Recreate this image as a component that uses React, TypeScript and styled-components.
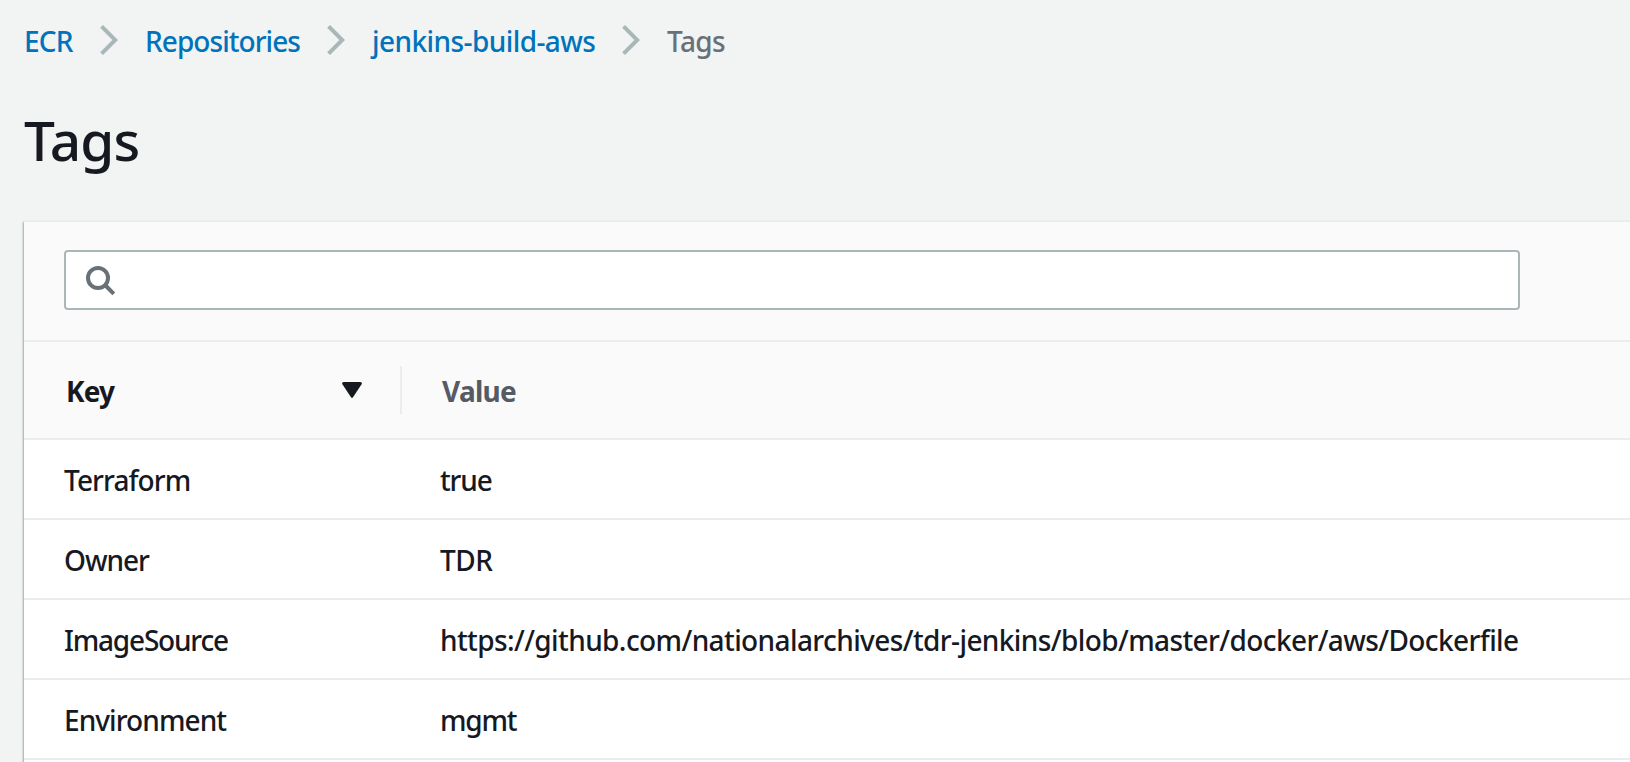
import React from 'react';
import styled, { createGlobalStyle } from 'styled-components';

const GlobalStyle = createGlobalStyle`
  * { box-sizing: border-box; }
  html, body { margin: 0; height: 100%; overflow: hidden; }
  body {
    background: #f2f3f3;
    color: #16191f;
    font-family: 'Noto Sans', 'Open Sans', sans-serif;
    font-size: 28px;
    font-weight: 500;
    line-height: 40px;
  }
`;

const Page = styled.main`
  height: 762px;
  padding-left: 24px;
  overflow: hidden;
`;

const Breadcrumbs = styled.nav`
  display: flex;
  align-items: center;
  height: 80px;
`;

const Label = styled.span<{ $track: number }>`
  letter-spacing: ${(p) => p.$track}px;
  white-space: nowrap;
`;

const Crumb = styled(Label).attrs({ as: 'a' })<{ $width: number }>`
  width: ${(p) => p.$width}px;
  padding-top: 1px;
  color: #0073bb;
`;

const CurrentCrumb = styled(Label)`
  padding-top: 1px;
  color: #687078;
`;

const Chevron = styled.svg`
  width: 18px;
  height: 32px;
  margin-right: 27px;
  flex: none;
  fill: none;
  stroke: #aab7b8;
  stroke-width: 4;
`;

const Title = styled.h1`
  margin: 20px 0 41px;
  font-size: 55px;
  font-weight: 500;
  line-height: 79px;
  letter-spacing: -0.85px;
`;

const Panel = styled.section`
  width: 1640px;
  height: 600px;
  background: #fff;
  border-top: 2px solid #eaeded;
  box-shadow: 0 2px 2px rgba(0, 28, 36, 0.3), -1px 2px 2px rgba(0, 28, 36, 0.25);
`;

const Toolbar = styled.div`
  height: 120px;
  padding: 28px 40px 0;
  background: #fafafa;
  border-bottom: 2px solid #eaeded;
`;

const SearchBox = styled.div`
  display: flex;
  align-items: center;
  width: 1456px;
  height: 60px;
  padding-left: 18px;
  background: #fff;
  border: 2px solid #aab7b8;
  border-radius: 4px;
`;

const SearchIcon = styled.svg`
  width: 32px;
  height: 32px;
  fill: none;
  stroke: #687078;
  stroke-width: 4;
`;

const columns = `
  display: grid;
  grid-template-columns: 378px 1fr;
  align-items: center;
`;

const HeaderRow = styled.div`
  ${columns}
  height: 98px;
  background: #fafafa;
  border-bottom: 2px solid #eaeded;
  font-weight: 700;
`;

const KeyHeader = styled.div`
  display: flex;
  align-items: center;
  justify-content: space-between;
  height: 48px;
  padding: 0 38px 0 42px;
  border-right: 2px solid #eaeded;
`;

const ValueHeader = styled.div`
  padding-left: 40px;
  color: #545b64;
`;

const HeaderLabel = styled(Label)`
  padding-top: 1px;
  display: inline-block;
`;

const SortIcon = styled.svg`
  width: 20px;
  height: 16px;
  fill: #16191f;
`;

const Row = styled.div`
  ${columns}
  height: 80px;
  padding-top: 2px;
  border-bottom: 2px solid #eaeded;
`;

const KeyCell = styled.div`
  padding-left: 40px;
`;

const ValueCell = styled.div`
  padding-left: 38px;
`;

interface Text {
  text: string;
  track: number;
}

const crumbs: (Text & { width: number })[] = [
  { text: 'ECR', track: -0.85, width: 76 },
  { text: 'Repositories', track: -0.94, width: 182 },
  { text: 'jenkins-build-aws', track: -0.58, width: 250 },
];

const rows: { key: Text; value: Text }[] = [
  { key: { text: 'Terraform', track: -0.9 }, value: { text: 'true', track: -1.1 } },
  { key: { text: 'Owner', track: -1.05 }, value: { text: 'TDR', track: -0.5 } },
  {
    key: { text: 'ImageSource', track: -1.2 },
    value: {
      text: 'https://github.com/nationalarchives/tdr-jenkins/blob/master/docker/aws/Dockerfile',
      track: -0.6,
    },
  },
  { key: { text: 'Environment', track: -0.93 }, value: { text: 'mgmt', track: -1.2 } },
];

export default function App() {
  return (
    <Page>
      <GlobalStyle />
      <Breadcrumbs>
        {crumbs.map((c) => (
          <React.Fragment key={c.text}>
            <Crumb $track={c.track} $width={c.width}>{c.text}</Crumb>
            <Chevron viewBox="0 0 18 32">
              <path d="M1.6 2.4 L15.2 16 L1.6 29.6" />
            </Chevron>
          </React.Fragment>
        ))}
        <CurrentCrumb $track={-0.6}>Tags</CurrentCrumb>
      </Breadcrumbs>
      <Title>Tags</Title>
      <Panel>
        <Toolbar>
          <SearchBox>
            <SearchIcon viewBox="0 0 32 32">
              <circle cx="14" cy="14" r="10" />
              <path d="M21 21 L29.8 29.8" />
            </SearchIcon>
          </SearchBox>
        </Toolbar>
        <HeaderRow>
          <KeyHeader>
            <HeaderLabel $track={-0.9}>Key</HeaderLabel>
            <SortIcon viewBox="0 0 20 16">
              <path d="M1.6 0 H18.4 Q20.6 0.3 19.6 2.2 L11 15.3 Q10 16.6 9 15.3 L0.4 2.2 Q-0.6 0.3 1.6 0 Z" />
            </SortIcon>
          </KeyHeader>
          <ValueHeader>
            <HeaderLabel $track={-0.75}>Value</HeaderLabel>
          </ValueHeader>
        </HeaderRow>
        {rows.map((r) => (
          <Row key={r.key.text}>
            <KeyCell>
              <Label $track={r.key.track}>{r.key.text}</Label>
            </KeyCell>
            <ValueCell>
              <Label $track={r.value.track}>{r.value.text}</Label>
            </ValueCell>
          </Row>
        ))}
      </Panel>
    </Page>
  );
}
